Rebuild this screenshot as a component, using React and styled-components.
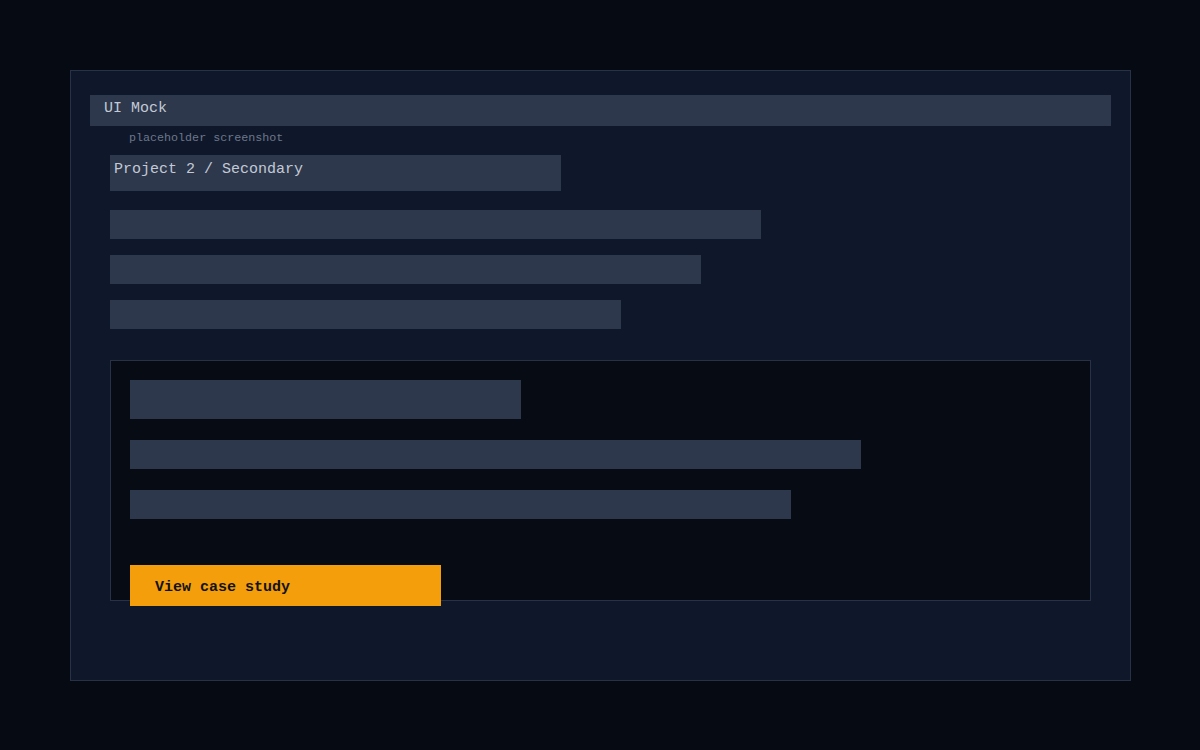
import React from "react"
import styled, { createGlobalStyle } from "styled-components"

const GlobalStyle = createGlobalStyle`
  html, body {
    margin: 0;
    padding: 0;
    background: #060a12;
  }
  body {
    font-family: "Liberation Mono", "DejaVu Sans Mono", monospace;
  }
`

const Page = styled.div`
  width: 1200px;
  height: 750px;
  padding: 70px 69px 70px 70px;
  box-sizing: border-box;
  background: #060a12;
`

const Frame = styled.section`
  height: 611px;
  box-sizing: border-box;
  background: #0f172a;
  border: 1px solid #273247;
  padding: 24px 19px 0 19px;
`

const MockBar = styled.div`
  height: 31px;
  box-sizing: border-box;
  background: #2d384c;
  color: #c3cad6;
  font-size: 15px;
  line-height: 17px;
  padding: 5px 14px 0;
`

const Caption = styled.div`
  margin: 5px 0 0 39px;
  color: #6d788b;
  font-size: 11.7px;
  line-height: 14px;
`

const Body = styled.div`
  padding: 10px 20px 0;
`

const TitleBox = styled.div`
  width: 451px;
  height: 36px;
  box-sizing: border-box;
  background: #2d384c;
  color: #c3cad6;
  font-size: 15px;
  line-height: 17px;
  padding: 6px 4px 0;
`

const Lines = styled.div`
  display: flex;
  flex-direction: column;
  gap: 16px;
  margin-top: 19px;
`

const Bar = styled.div`
  width: ${p => p.$w}px;
  height: ${p => p.$h || 29}px;
  flex-shrink: 0;
  background: #2d384c;
  margin-top: ${p => p.$mt || 0}px;
`

const Card = styled.div`
  margin-top: 31px;
  width: 981px;
  height: 241px;
  box-sizing: border-box;
  background: #070b13;
  border: 1px solid #273247;
  padding: 19px 19px 0;
  display: flex;
  flex-direction: column;
  align-items: flex-start;
`

const Button = styled.button`
  margin-top: 46px;
  width: 311px;
  height: 41px;
  flex-shrink: 0;
  border: none;
  background: #f59e0b;
  color: #111318;
  font-family: "Liberation Mono", "DejaVu Sans Mono", monospace;
  font-size: 15px;
  font-weight: bold;
  text-align: left;
  padding: 3px 25px 0;
  cursor: pointer;
`

export default function App() {
  return (
    <>
      <GlobalStyle />
      <Page>
        <Frame>
          <MockBar>UI Mock</MockBar>
          <Caption>placeholder screenshot</Caption>
          <Body>
            <TitleBox>Project 2 / Secondary</TitleBox>
            <Lines>
              <Bar $w={651} />
              <Bar $w={591} />
              <Bar $w={511} />
            </Lines>
            <Card>
              <Bar $w={391} $h={39} />
              <Bar $w={731} $mt={21} />
              <Bar $w={661} $mt={21} />
              <Button>View case study</Button>
            </Card>
          </Body>
        </Frame>
      </Page>
    </>
  )
}
